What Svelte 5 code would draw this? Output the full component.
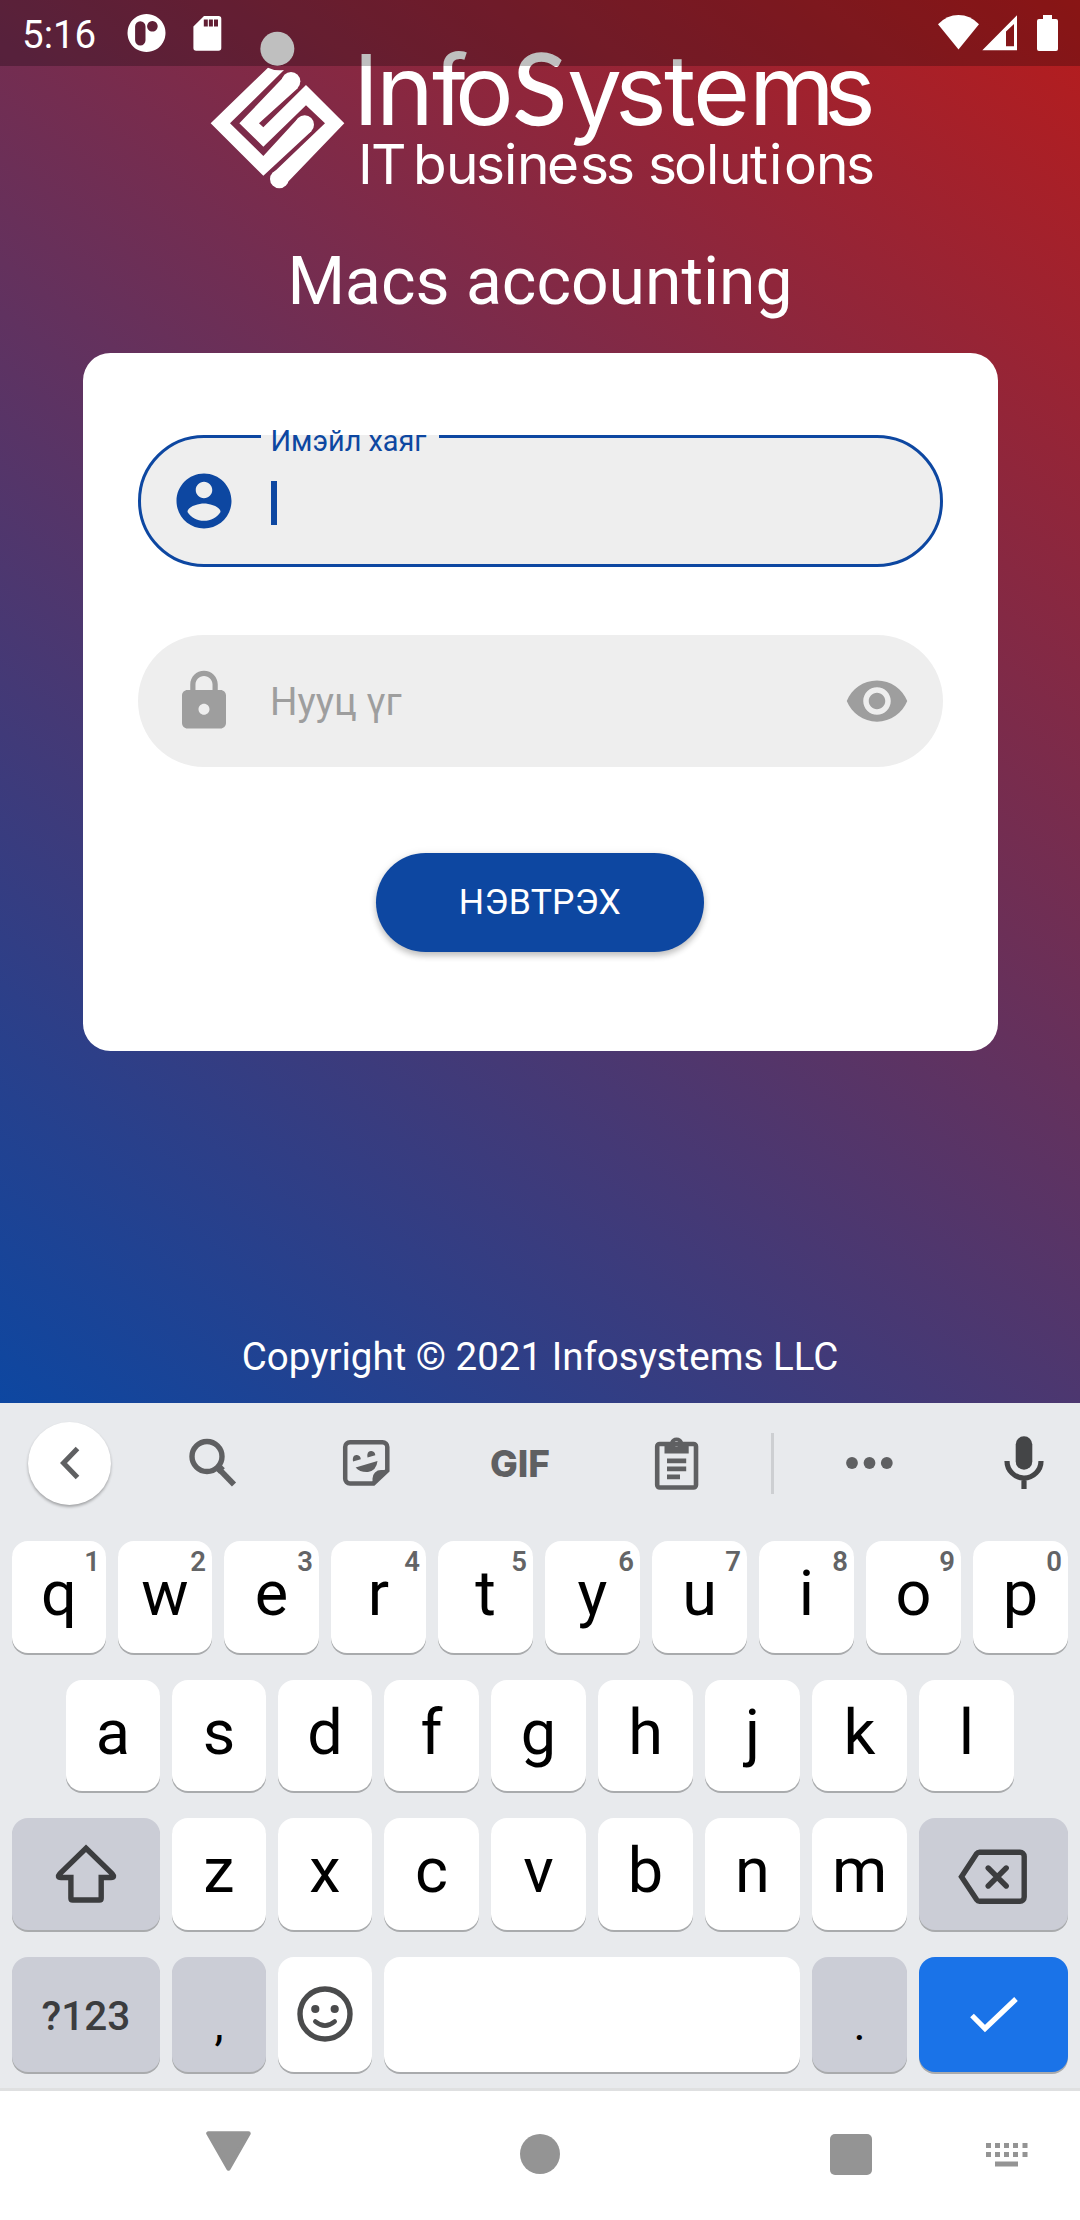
<script>
  const rowOne = ['q', 'w', 'e', 'r', 't', 'y', 'u', 'i', 'o', 'p'].map((letter, i) => ({
    letter,
    hint: (i + 1) % 10
  }));
  const rowTwo = ['a', 's', 'd', 'f', 'g', 'h', 'j', 'k', 'l'];
  const rowThree = ['z', 'x', 'c', 'v', 'b', 'n', 'm'];
  const dotColumns = [0, 9, 18, 27, 36.5];
</script>

<div class="screen">
  <div class="status">
    <span class="time">5:16</span>
    <svg class="notif" viewBox="127 13 39 40" width="39" height="40">
      <path fill="#fff" fill-rule="evenodd" d="M146.500 14a19 19 0 1 0 .01 0zM140.300 21.200a5.200 5.200 0 0 1 5.200 5.200v13.800a5.200 5.200 0 0 1-10.400 0v-13.800a5.200 5.200 0 0 1 5.200-5.200zM152.400 21a5.300 5.300 0 1 1-.01 0z" />
    </svg>
    <svg class="sd" viewBox="193 15 29 37" width="29" height="37">
      <path fill="#fff" fill-rule="evenodd" d="M204 16h14.500a2.800 2.800 0 0 1 2.800 2.800V48a2.800 2.800 0 0 1-2.800 2.800H196.200a2.800 2.800 0 0 1-2.800-2.800V26.500zM203.800 19.500v7h4v-7zM208.900 19.500v7h4v-7zM214 19.500v7h4v-7z" />
    </svg>
    <svg class="signals" viewBox="937 13 123 40" width="123" height="40">
      <g fill="#fff">
        <path d="M958.500 49.500L938 24.200Q947 15 958.500 15T979 24.200z" />
        <path fill-rule="evenodd" d="M982.300 50.200L1017 15.300V50.200zM1006 46.200h8V24l-8 7.500z" />
        <path d="M1043 15h9v4h4a2 2 0 0 1 2 2v28a2 2 0 0 1-2 2h-17a2 2 0 0 1-2-2V21a2 2 0 0 1 2-2h4z" />
      </g>
    </svg>
  </div>

  <main class="login">
    <svg class="logo" viewBox="210 32 660 156" width="660" height="156">
      <g transform="translate(190 20) scale(.33333)" fill="#fff">
        <circle cx="262" cy="86" r="51" />
        <path d="M234 143L62 310 220 467 364 334 325 294 220 408 120 310 282 150Q256 154 234 143z" />
        <circle cx="344" cy="314" r="28" />
        <path d="M284 168L278 174 148 310 220 380 348 256 405 310 246 462 290 490 463 310 348 195 220 322 207 310 324 204z" />
        <circle cx="303" cy="184" r="28" />
        <circle cx="268" cy="477" r="28" />
      </g>
      <g class="logo-text">
        <text class="brand" y="125.300" x="353 376 432 455 513 567 615 664 693 749 824">Info<tspan class="narrow">S</tspan>ystems</text>
        <text class="tagline" y="184" x="358 371 404 413 446 476 504 517 547 580 606 634 648 674 706 719 750 769 784 816 846">IT business solutions</text>
      </g>
    </svg>

    <h1>Macs accounting</h1>

    <form class="card">
      <div class="field active">
        <svg class="lead" viewBox="0 0 24 24" width="66" height="66">
          <path fill="#0d47a1" d="M12 2C6.480 2 2 6.480 2 12s4.480 10 10 10 10-4.480 10-10S17.520 2 12 2zm0 3c1.660 0 3 1.340 3 3s-1.340 3-3 3-3-1.340-3-3 1.340-3 3-3zm0 14.200c-2.500 0-4.710-1.280-6-3.220.03-1.990 4-3.080 6-3.080 1.990 0 5.970 1.090 6 3.080-1.290 1.940-3.500 3.220-6 3.220z" />
        </svg>
        <span class="caret"></span>
        <span class="label">Имэйл хаяг</span>
      </div>
      <div class="field">
        <svg class="lead" viewBox="0 0 24 24" width="66" height="66">
          <path fill="#9e9e9e" d="M18 8h-1V6c0-2.760-2.240-5-5-5S7 3.240 7 6v2H6c-1.100 0-2 .9-2 2v10c0 1.100.9 2 2 2h12c1.100 0 2-.9 2-2V10c0-1.100-.9-2-2-2zm-6 9c-1.100 0-2-.9-2-2s.9-2 2-2 2 .9 2 2-.9 2-2 2zm3.100-9H8.900V6c0-1.710 1.390-3.100 3.100-3.100 1.710 0 3.100 1.390 3.100 3.100v2z" />
        </svg>
        <span class="placeholder">Нууц үг</span>
        <svg class="eye" viewBox="0 0 24 24" width="66" height="66">
          <path fill="#9e9e9e" d="M12 4.500C7 4.500 2.730 7.610 1 12c1.730 4.390 6 7.500 11 7.500s9.270-3.110 11-7.500c-1.730-4.390-6-7.500-11-7.500zM12 17c-2.760 0-5-2.240-5-5s2.240-5 5-5 5 2.240 5 5-2.240 5-5 5zm0-8c-1.660 0-3 1.340-3 3s1.340 3 3 3 3-1.340 3-3-1.340-3-3-3z" />
        </svg>
      </div>
      <button type="button">НЭВТРЭХ</button>
    </form>

    <p class="copyright">Copyright © 2021 Infosystems LLC</p>
  </main>

  <section class="keyboard">
    <div class="toolbar">
      <span class="back">
        <svg viewBox="0 0 20 34" width="20" height="34"><path d="M17.500 2.500L3.500 17l14 14.500" fill="none" stroke="#5f6062" stroke-width="5" /></svg>
      </span>
      <svg viewBox="189 1440 48 50" width="48" height="50" fill="none" stroke="#5f6062">
        <circle cx="207" cy="1458.500" r="15" stroke-width="5.400" />
        <path d="M218 1470L234 1486.500" stroke-width="5.800" />
        <path d="M217 1468l5 5" stroke-width="8" />
      </svg>
      <svg viewBox="342 1439 48 48" width="48" height="48">
        <path d="M350 1442.200H382.500a4.800 4.800 0 0 1 4.800 4.800v23.500L373.500 1483.500H350a4.800 4.800 0 0 1-4.800-4.800V1447a4.800 4.800 0 0 1 4.800-4.800z" fill="none" stroke="#5f6062" stroke-width="4.500" />
        <path fill="#5f6062" d="M372.500 1485v-6.500a8.500 8.500 0 0 1 8.500-8.500h8zM353 1461.500q-1-7 4-6.500 3.500.5 3.800 4.300zM367.500 1457.500q-1-7 4-6.500 3.500.5 3.800 4.300zM355.600 1467.500L377.500 1461q-1 9.500-9.500 11-8 .5-12.400-4.500z" />
      </svg>
      <span class="gif">GIF</span>
      <svg viewBox="654 1436 46 54" width="46" height="54">
        <rect x="657.200" y="1444" width="38.800" height="43.500" rx="2.500" fill="none" stroke="#5f6062" stroke-width="4.600" />
        <path fill="#5f6062" fill-rule="evenodd" d="M664.500 1442h5.700a6.800 6.800 0 0 1 12.800 0h5.700v11.500h-24.200zM676.500 1441.300a2.600 2.600 0 1 0 .01 0z" />
        <path fill="#5f6062" d="M667 1458.500h19.200v4.700H667zM667 1466.500h19.200v4.700H667zM667 1474.500h13v4.700h-13z" />
      </svg>
      <span class="divider"></span>
      <svg viewBox="845 1457 49 14" width="49" height="14" fill="#5f6062">
        <circle cx="852" cy="1464" r="5.900" /><circle cx="869.500" cy="1464" r="5.900" /><circle cx="886.800" cy="1464" r="5.900" />
      </svg>
      <svg class="mic" viewBox="1004 1436 40 54" width="40" height="54">
        <rect x="1015.700" y="1436.300" width="16.600" height="33.400" rx="8.300" fill="#444547" />
        <path d="M1007 1461a17 17 0 0 0 34 0M1024 1477.500v11.500" fill="none" stroke="#444547" stroke-width="5.200" />
      </svg>
    </div>

    <div class="row one">
      {#each rowOne as key}
        <span class="key">{key.letter}<sup>{key.hint}</sup></span>
      {/each}
    </div>
    <div class="row two">
      {#each rowTwo as letter}
        <span class="key">{letter}</span>
      {/each}
    </div>
    <div class="row three">
      <span class="key gray icon">
        <svg class="shift" viewBox="0 0 62 60" width="62" height="60">
          <path d="M31 4.200L57 29.500q3.500 4-1 4H46.200V54.200q0 1.800-1.800 1.800H17.700q-1.800 0-1.800-1.800V33.500H6q-4.500 0-1-4z" fill="none" stroke="#3c3d3f" stroke-width="5.400" />
        </svg>
      </span>
      {#each rowThree as letter}
        <span class="key">{letter}</span>
      {/each}
      <span class="key gray icon">
        <svg class="erase" viewBox="0 0 70 56" width="70" height="56">
          <path d="M21.500 3.200H62a4.200 4.200 0 0 1 4.200 4.200V48a4.200 4.200 0 0 1-4.200 4.200H21.500q-1.800 0-2.800-1.400L3.500 27.700 18.700 4.600q1-1.400 2.800-1.400zM30.200 19L48.200 37M48.200 19L30.200 37" fill="none" stroke="#3c3d3f" stroke-width="5.400" stroke-linecap="round" />
        </svg>
      </span>
    </div>
    <div class="row four">
      <span class="key gray symbols">?123</span>
      <span class="key gray mark">,</span>
      <span class="key icon">
        <svg viewBox="0 0 56 56" width="56" height="56">
          <circle cx="28" cy="28" r="25" fill="none" stroke="#4a4b4c" stroke-width="5.400" />
          <circle cx="18.300" cy="23" r="4.100" fill="#4a4b4c" /><circle cx="37.700" cy="23" r="4.100" fill="#4a4b4c" />
          <path d="M18.300 35.500Q28 43.800 37.700 35.500" fill="none" stroke="#4a4b4c" stroke-width="4.600" stroke-linecap="round" />
        </svg>
      </span>
      <span class="key"></span>
      <span class="key gray mark">.</span>
      <span class="key enter icon">
        <svg viewBox="0 0 48 37" width="48" height="37"><path d="M2 19.500L15 32.500 46 3" fill="none" stroke="#fff" stroke-width="5.200" /></svg>
      </span>
    </div>
  </section>

  <nav>
    <svg class="nav-back" viewBox="0 0 45 40" width="45" height="40"><path d="M2.500 2.500H42.500L22.500 37.500z" fill="#949494" stroke="#949494" stroke-width="4.500" stroke-linejoin="round" /></svg>
    <span class="home"></span>
    <span class="recents"></span>
    <svg class="ime" viewBox="0 0 42 24" width="42" height="24" fill="#949494">
      {#each dotColumns as x}
        <rect {x} y="0" width="5" height="5" />
        <rect {x} y="9" width="5" height="5" />
      {/each}
      <rect x="9" y="18.500" width="23" height="5" />
    </svg>
  </nav>
</div>

<style>
  :global(body) {
    margin: 0;
  }
  .screen {
    position: relative;
    width: 1080px;
    height: 2220px;
    overflow: hidden;
    display: flex;
    flex-direction: column;
    font-family: Roboto, 'Open Sans', sans-serif;
    background: #fff;
  }
  svg {
    display: block;
    flex: none;
  }
  .status {
    position: absolute;
    inset: 0 0 auto 0;
    z-index: 2;
    box-sizing: border-box;
    height: 66px;
    padding: 0 20px 0 22px;
    display: flex;
    align-items: center;
    background: rgba(0, 0, 0, 0.25);
    color: #fff;
  }
  .time {
    width: 105px;
    padding-top: 4px;
    font-size: 38.5px;
    line-height: 66px;
  }
  .sd {
    margin-left: 27px;
  }
  .signals {
    margin-left: auto;
  }
  .login {
    box-sizing: border-box;
    height: 1403px;
    padding: 32px 82.5px 0;
    display: flex;
    flex-direction: column;
    align-items: center;
    background: linear-gradient(217.59deg, #b71c1c, #0d47a1);
    color: #fff;
  }
  .logo {
    overflow: visible;
  }
  .logo-text {
    fill: #fff;
    font-family: Inter, Lato, sans-serif;
  }
  .brand {
    font-size: 98px;
    font-weight: 400;
  }
  .narrow {
    font-family: Lato, sans-serif;
    font-size: 99px;
    stroke: #fff;
    stroke-width: 1.5px;
  }
  .tagline {
    font-size: 55px;
    font-weight: 400;
  }
  h1 {
    margin: 53.5px 0 0;
    height: 80px;
    line-height: 80px;
    font-size: 66px;
    font-weight: 400;
    white-space: nowrap;
  }
  .card {
    box-sizing: border-box;
    width: 915px;
    height: 698px;
    margin-top: 31px;
    padding: 82px 55px 0;
    border-radius: 27.5px;
    background: #fff;
    display: flex;
    flex-direction: column;
    align-items: center;
  }
  .field {
    position: relative;
    box-sizing: border-box;
    width: 805px;
    height: 132px;
    margin-bottom: 68.500px;
    padding: 0 33px;
    border-radius: 66px;
    background: #eee;
    display: flex;
    align-items: center;
  }
  .active {
    border: 3px solid #0d47a1;
    padding: 0 30px;
  }
  .caret {
    width: 6px;
    height: 44px;
    margin: 4px 0 0 34px;
    background: #0d47a1;
  }
  .label {
    position: absolute;
    left: 120px;
    top: -16px;
    width: 168px;
    padding-left: 10px;
    font-size: 28.875px;
    line-height: 38px;
    color: #0d47a1;
    white-space: nowrap;
    background: linear-gradient(#fff 0 13px, #eee 13px);
  }
  .placeholder {
    flex: 1;
    margin-left: 33.500px;
    font-size: 38.5px;
    color: #9e9e9e;
  }
  button {
    width: 328px;
    height: 99px;
    margin-top: 17px;
    padding: 0;
    border: 0;
    border-radius: 50px;
    background: #0d47a1;
    color: #fff;
    font: 400 35.5px Roboto, sans-serif;
    letter-spacing: 0.3px;
    box-shadow: 0 4px 6px rgba(0, 0, 0, 0.2), 0 1px 8px rgba(0, 0, 0, 0.1);
  }
  .copyright {
    margin: 276px 0 0;
    font-size: 38.5px;
    line-height: 60px;
    white-space: nowrap;
  }
  .keyboard {
    height: 688px;
    box-sizing: border-box;
    border-bottom: 3px solid #dfe0e1;
    background: #e8eaed;
  }
  .toolbar {
    height: 138px;
    display: grid;
    grid-template-columns: 139px 147px 160px 148px 165px 27px 167px 127px;
    align-items: center;
    justify-items: center;
    box-sizing: border-box;
    padding-bottom: 18px;
  }
  .back {
    width: 83px;
    height: 83px;
    border-radius: 50%;
    background: #fff;
    display: flex;
    align-items: center;
    justify-content: center;
    box-shadow: 0 2px 3px rgba(0, 0, 0, 0.3);
  }
  .gif {
    font-family: Inter, Roboto, sans-serif;
    font-size: 37px;
    font-weight: 800;
    color: #5f6062;
  }
  .divider {
    width: 3px;
    height: 61px;
    background: #cdcfd2;
  }
  .mic {
    justify-self: end;
    margin-right: 36px;
  }
  .row {
    display: grid;
    gap: 12px;
    height: 111.500px;
    padding: 0 12px;
    margin-bottom: 27px;
  }
  .one {
    grid-template-columns: 94px 94px repeat(8, 95px);
  }
  .two {
    grid-template-columns: 94px 94px 94px repeat(6, 95px);
    padding: 0 66px;
  }
  .three {
    grid-template-columns: 148px 94px 94px repeat(5, 95px) 149px;
  }
  .four {
    height: 115px;
    margin: 0;
    grid-template-columns: 148px 94px 94px 416px 95px 149px;
    grid-template-rows: 115px;
  }
  .key {
    position: relative;
    border-radius: 16px;
    background: #fff;
    box-shadow: 0 2px 0 #a9abad;
    color: #000;
    font-size: 63px;
    line-height: 105px;
    text-align: center;
  }
  .key sup {
    position: absolute;
    right: 6px;
    top: 5px;
    font-size: 27.5px;
    line-height: 32px;
    font-weight: 600;
    color: #636466;
  }
  .gray {
    background: #cbcdd6;
  }
  .enter {
    background: #1a73e8;
  }
  .icon {
    display: flex;
    align-items: center;
    justify-content: center;
  }
  .key .erase {
    margin: 6px 0 0 -2px;
  }
  .symbols {
    font-size: 40.5px;
    font-weight: 500;
    line-height: 118px;
    color: #3c3d3f;
  }
  .mark {
    font-size: 46px;
    line-height: 134px;
  }
  nav {
    height: 129px;
    box-sizing: border-box;
    padding: 40px 52px 0 206px;
    display: flex;
    align-items: flex-start;
  }
  .home {
    width: 40px;
    height: 40px;
    margin: 3px 0 0 269px;
    border-radius: 50%;
    background: #949494;
  }
  .recents {
    width: 42px;
    height: 41px;
    margin: 3px 0 0 270px;
    border-radius: 5px;
    background: #949494;
  }
  .ime {
    margin: 12px 0 0 auto;
  }
</style>
